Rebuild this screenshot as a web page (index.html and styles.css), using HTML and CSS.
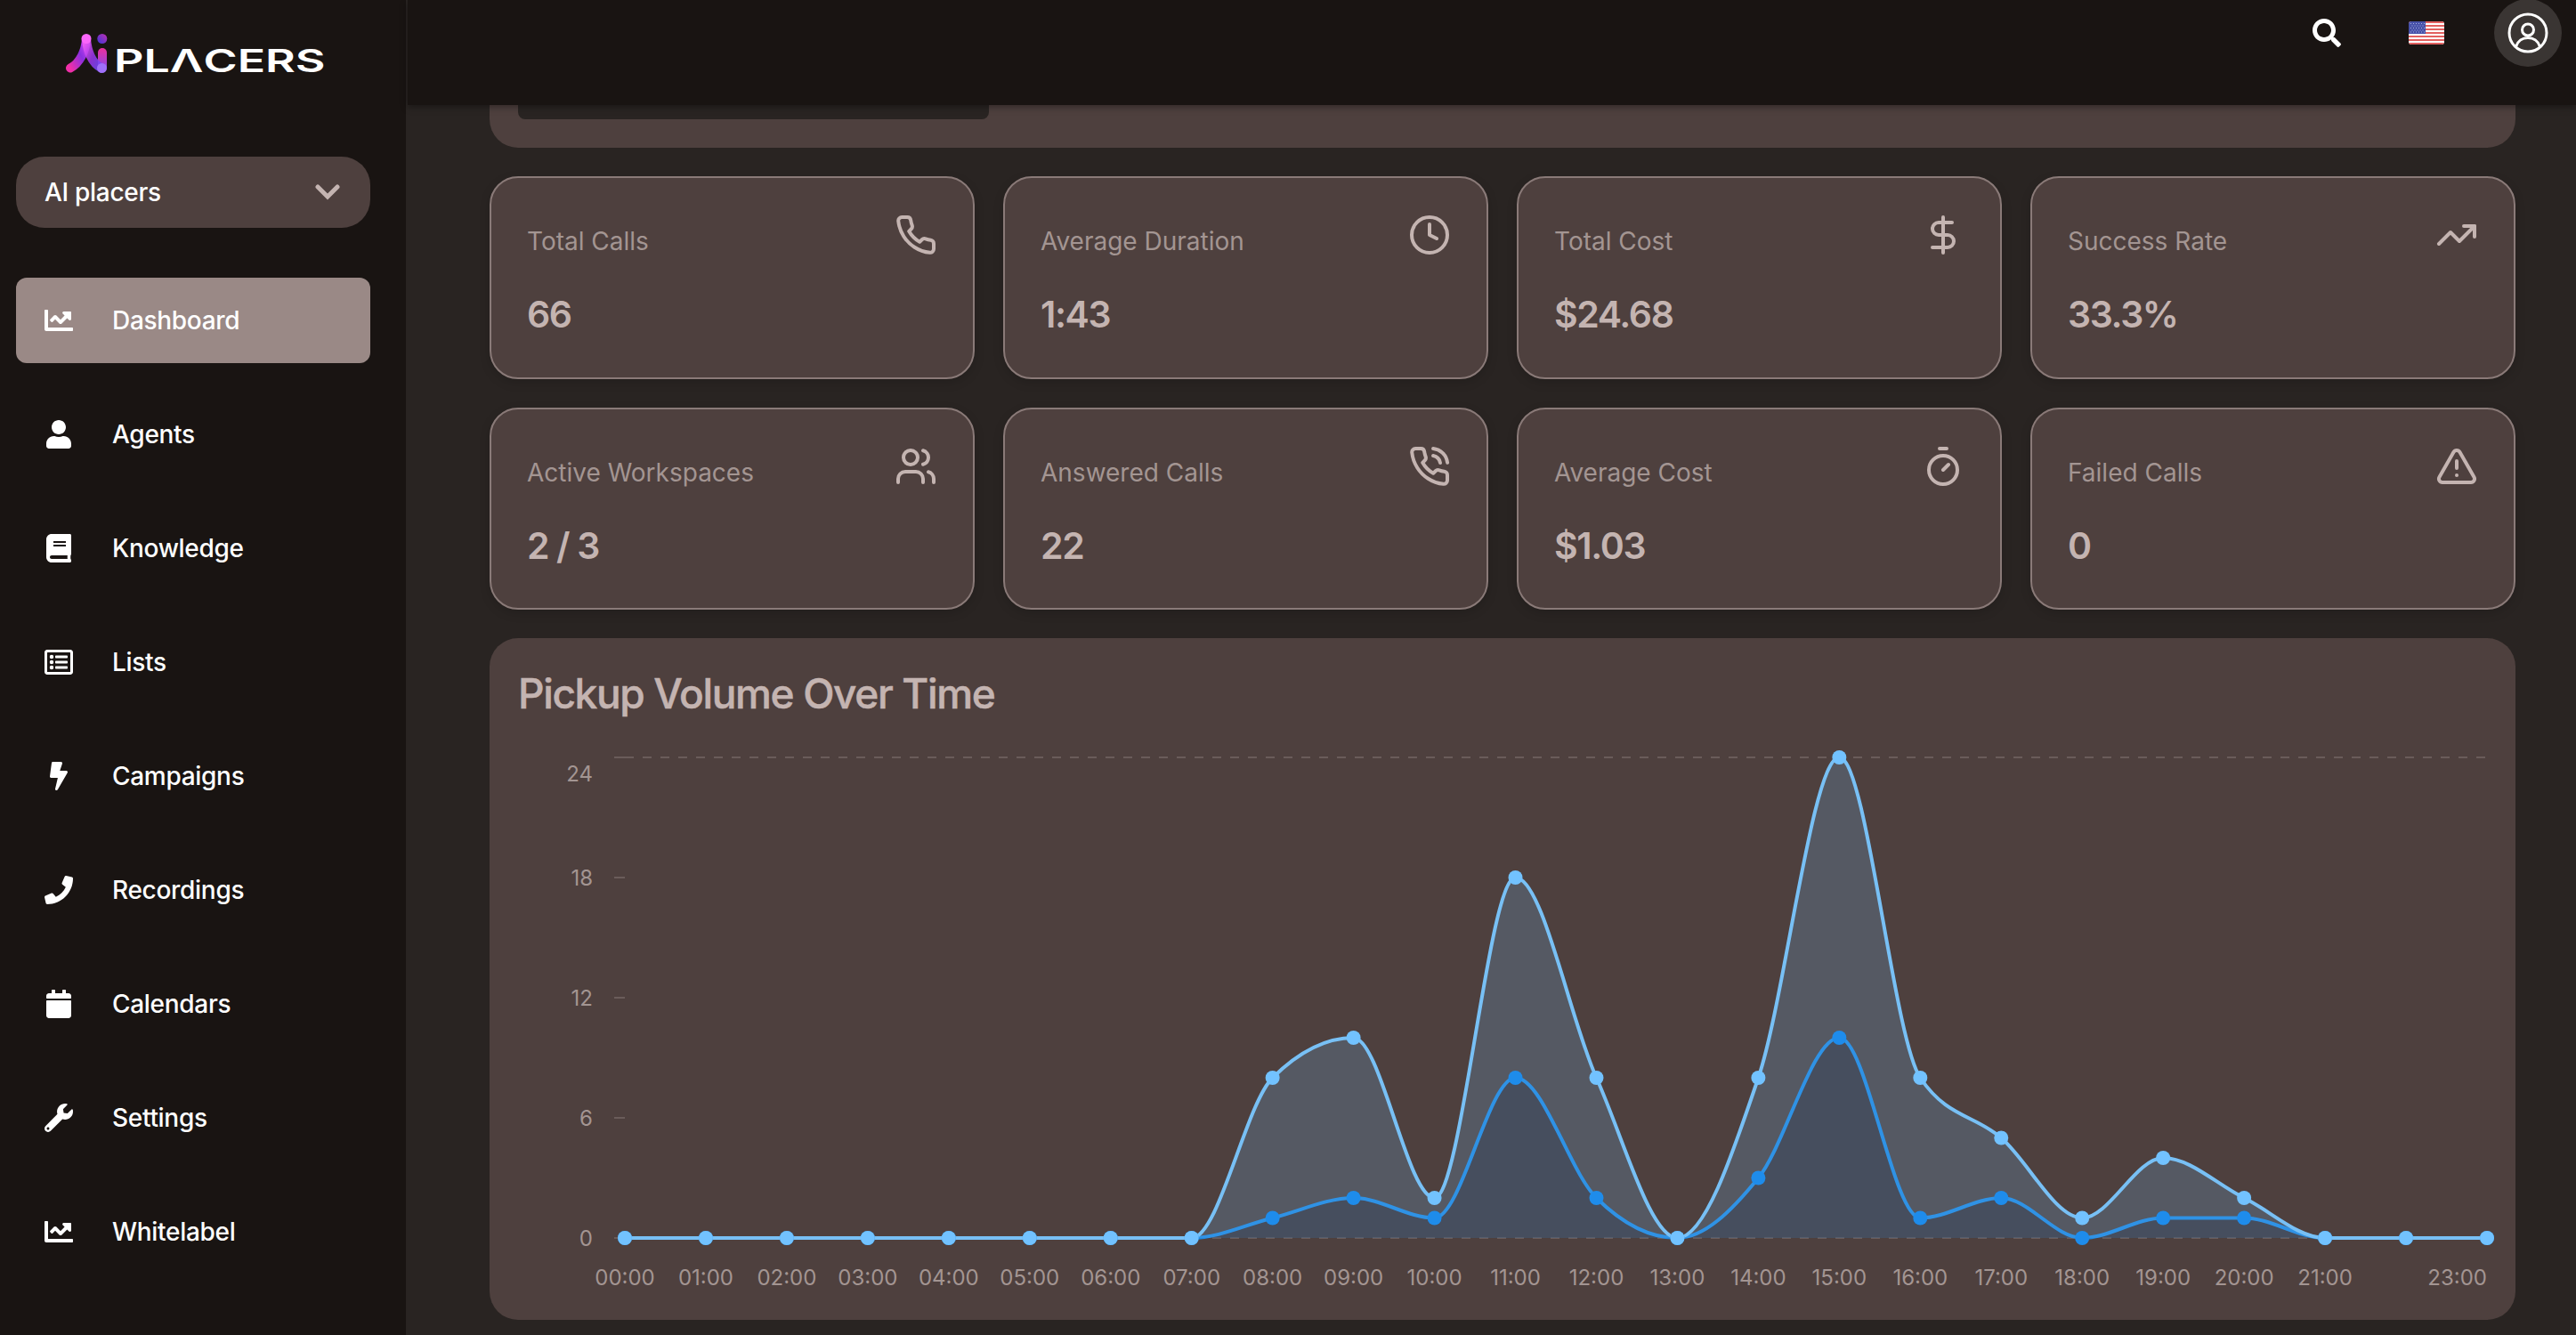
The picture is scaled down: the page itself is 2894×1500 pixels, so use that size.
FILE: index.html
```html
<!DOCTYPE html>
<html lang="en">
<head>
  <meta charset="UTF-8" />
  <meta name="viewport" content="width=device-width, initial-scale=1.0"/>
  <title>Dashboard - AI Placers</title>
  <link rel="stylesheet" href="styles.css">
</head>
<body>
  <svg class="sprite" aria-hidden="true">
    <symbol id="chart" viewBox="0 0 512 512"><path d="M496 384H64V80c0-8.840-7.160-16-16-16H16C7.160 64 0 71.160 0 80v336c0 17.670 14.330 32 32 32h464c8.840 0 16-7.160 16-16v-32c0-8.840-7.160-16-16-16zM464 96H345.940c-21.380 0-32.090 25.850-16.970 40.970l32.400 32.400L288 242.750l-73.370-73.370c-12.500-12.500-32.760-12.500-45.250 0l-68.690 68.690c-6.250 6.250-6.250 16.380 0 22.630l22.620 22.620c6.250 6.250 16.380 6.250 22.630 0L192 237.250l73.370 73.370c12.500 12.500 32.760 12.500 45.250 0l96-96 32.400 32.400c15.120 15.120 40.970 4.410 40.970-16.970V112c.010-8.840-7.150-16-15.990-16z"/></symbol>
    <symbol id="user" viewBox="0 0 512 512"><path d="M256 256c70.700 0 128-57.300 128-128S326.700 0 256 0 128 57.300 128 128s57.300 128 128 128zm89.600 32h-16.700c-22.200 10.200-46.900 16-72.900 16s-50.600-5.800-72.900-16h-16.700C92.200 288 32 348.200 32 422.400V464c0 26.500 21.500 48 48 48h352c26.500 0 48-21.500 48-48v-41.600c0-74.200-60.200-134.400-134.400-134.400z"/></symbol>
    <symbol id="book" viewBox="0 0 512 512"><path d="M480 360V24c0-13.300-10.700-24-24-24H128C75 0 32 43 32 96v320c0 53 43 96 96 96h328c13.300 0 24-10.700 24-24v-16c0-7.500-3.500-14.300-8.900-18.700-4.200-15.400-4.200-59.300 0-74.700 5.400-4.300 8.900-11.100 8.900-18.600zM160 134c0-3.300 2.700-6 6-6h212c3.300 0 6 2.700 6 6v20c0 3.300-2.700 6-6 6H166c-3.300 0-6-2.700-6-6v-20zm0 64c0-3.300 2.700-6 6-6h212c3.300 0 6 2.700 6 6v20c0 3.300-2.700 6-6 6H166c-3.300 0-6-2.700-6-6v-20zm253.400 250H128c-17.700 0-32-14.300-32-32 0-17.600 14.400-32 32-32h285.400c-1.900 17.100-1.900 46.900 0 64z"/></symbol>
    <symbol id="list" viewBox="0 0 512 512"><path d="M464 32H48C21.490 32 0 53.490 0 80v352c0 26.510 21.490 48 48 48h416c26.510 0 48-21.490 48-48V80c0-26.510-21.490-48-48-48zm-6 400H54a6 6 0 0 1-6-6V86a6 6 0 0 1 6-6h404a6 6 0 0 1 6 6v340a6 6 0 0 1-6 6zm-42-92v24c0 6.600-5.400 12-12 12H204c-6.600 0-12-5.400-12-12v-24c0-6.600 5.400-12 12-12h200c6.600 0 12 5.400 12 12zm0-96v24c0 6.600-5.400 12-12 12H204c-6.600 0-12-5.400-12-12v-24c0-6.600 5.400-12 12-12h200c6.600 0 12 5.400 12 12zm0-96v24c0 6.600-5.400 12-12 12H204c-6.600 0-12-5.400-12-12v-24c0-6.600 5.400-12 12-12h200c6.600 0 12 5.400 12 12zm-252 12a36 36 0 1 1-72 0 36 36 0 0 1 72 0zm0 96a36 36 0 1 1-72 0 36 36 0 0 1 72 0zm0 96a36 36 0 1 1-72 0 36 36 0 0 1 72 0z"/></symbol>
    <symbol id="bolt" viewBox="-96 0 512 512"><path d="M296 160H180.600l42.600-129.800C227.200 15 215.700 0 200 0H56C44 0 33.800 8.900 32.200 20.800l-32 240C-1.700 275.200 9.500 288 24 288h118.700L96.600 482.500c-3.600 15.200 8 29.500 23.300 29.500 8.400 0 16.400-4.400 20.800-12l176-304c9.300-15.900-2.200-36-20.700-36z"/></symbol>
    <symbol id="phone-solid" viewBox="0 0 512 512"><path d="M493.400 24.600l-104-24c-11.300-2.600-22.900 3.300-27.500 13.900l-48 112c-4.200 9.800-1.400 21.300 6.900 28l60.600 49.600c-36 76.700-98.900 140.500-177.200 177.200l-49.600-60.600c-6.800-8.300-18.200-11.100-28-6.900l-112 48C3.900 366.500-2 378.100.6 389.400l24 104C27.100 504.200 36.700 512 48 512c256.100 0 464-207.500 464-464 0-11.200-7.700-20.900-18.600-23.400z"/></symbol>
    <symbol id="calendar" viewBox="0 0 512 512"><path d="M44 192h424c6.600 0 12 5.400 12 12v260c0 26.500-21.500 48-48 48H80c-26.500 0-48-21.500-48-48V204c0-6.600 5.400-12 12-12zm436-44v-36c0-26.500-21.500-48-48-48h-48V12c0-6.600-5.400-12-12-12h-40c-6.600 0-12 5.400-12 12v52H192V12c0-6.600-5.400-12-12-12h-40c-6.600 0-12 5.400-12 12v52H80c-26.500 0-48 21.500-48 48v36c0 6.600 5.400 12 12 12h424c6.600 0 12-5.400 12-12z"/></symbol>
    <symbol id="wrench" viewBox="0 0 512 512"><path d="M507.730 109.100c-2.240-9.030-13.540-12.090-20.120-5.510l-74.360 74.360-67.880-11.310-11.310-67.880 74.360-74.360c6.620-6.620 3.430-17.900-5.660-20.160-47.380-11.740-99.550.910-136.580 37.930-39.640 39.640-50.550 97.100-34.050 147.200L18.740 402.760c-24.990 24.990-24.990 65.510 0 90.500 24.990 24.990 65.510 24.990 90.500 0l213.210-213.210c50.120 16.710 107.470 5.680 147.370-34.220 37.070-37.070 49.700-89.320 37.910-136.730zM64 472c-13.250 0-24-10.750-24-24 0-13.260 10.750-24 24-24s24 10.740 24 24c0 13.250-10.750 24-24 24z"/></symbol>
    <symbol id="search" viewBox="0 0 512 512"><path d="M505 442.700L405.300 343c-4.500-4.500-10.600-7-17-7H372c27.600-35.300 44-79.700 44-128C416 93.100 322.900 0 208 0S0 93.100 0 208s93.100 208 208 208c48.300 0 92.700-16.400 128-44v16.300c0 6.400 2.500 12.500 7 17l99.700 99.700c9.400 9.400 24.600 9.400 33.900 0l28.300-28.300c9.400-9.400 9.400-24.600.1-34zM208 336c-70.700 0-128-57.200-128-128 0-70.700 57.200-128 128-128 70.700 0 128 57.200 128 128 0 70.700-57.200 128-128 128z"/></symbol>
  </svg>

  <aside class="sidebar">
    <div class="logo">
      <svg class="logo-mark" viewBox="0 0 48 44">
        <defs>
          <linearGradient id="leg" x1="0" y1="1" x2="1" y2="0"><stop offset="0" stop-color="#f02fa8"/><stop offset=".55" stop-color="#8a2fe0"/><stop offset="1" stop-color="#d94af0"/></linearGradient>
          <linearGradient id="leg2" x1="0" y1="0" x2="1" y2="1"><stop offset="0" stop-color="#f05cf5"/><stop offset=".5" stop-color="#9a35e8"/><stop offset="1" stop-color="#6a4cff"/></linearGradient>
          <linearGradient id="stem" gradientUnits="userSpaceOnUse" x1="42" y1="15" x2="42" y2="43"><stop offset="0" stop-color="#f02f9a"/><stop offset="1" stop-color="#7a4cf5"/></linearGradient>
          <linearGradient id="dot" x1="0" y1="1" x2="1" y2="0"><stop offset="0" stop-color="#3d35d8"/><stop offset="1" stop-color="#c02fb0"/></linearGradient>
        </defs>
        <path d="M6 38.500C17 33 23 19 24 6" stroke="url(#leg)"/>
        <path d="M42 21v17" stroke="url(#stem)"/>
        <path d="M24 6c1 13 6 27 17 32.500" stroke="url(#leg2)" opacity=".88"/>
        <circle cx="24" cy="5.500" r="5.500" fill="#fa66fa"/>
        <circle cx="41.500" cy="38.500" r="5.500" fill="#a070fa"/>
        <circle cx="41.800" cy="5.500" r="5.500" fill="url(#dot)"/>
      </svg>
      <span class="logo-text">PL&Lambda;CERS</span>
    </div>

    <div class="workspace">
      <span>AI placers</span>
      <svg viewBox="0 0 28 18"><path d="M3 3l11 11L25 3"/></svg>
    </div>

    <nav class="menu">
      <a class="item active"><svg><use href="#chart"/></svg>Dashboard</a>
      <a class="item"><svg><use href="#user"/></svg>Agents</a>
      <a class="item"><svg><use href="#book"/></svg>Knowledge</a>
      <a class="item"><svg><use href="#list"/></svg>Lists</a>
      <a class="item"><svg><use href="#bolt"/></svg>Campaigns</a>
      <a class="item"><svg><use href="#phone-solid"/></svg>Recordings</a>
      <a class="item"><svg><use href="#calendar"/></svg>Calendars</a>
      <a class="item"><svg><use href="#wrench"/></svg>Settings</a>
      <a class="item"><svg><use href="#chart"/></svg>Whitelabel</a>
    </nav>
  </aside>

  <div class="page">
    <header class="topbar">
      <svg class="search"><use href="#search"/></svg>
      <svg class="flag" viewBox="0 0 40 26">
        <rect width="40" height="26" fill="#fff"/>
        <path d="M0 1h40M0 5h40M0 9h40M0 13h40M0 17h40M0 21h40M0 25h40" stroke="#e2605f" stroke-width="2"/>
        <rect width="19" height="14" fill="#4650a8"/>
        <path d="M2 2.500h16M3.500 5h14M2 7.500h16M3.500 10h14M2 12h16" stroke="#aab0dc" stroke-width="1" stroke-dasharray="1 2"/>
      </svg>
      <div class="avatar">
        <svg viewBox="0 0 46 46"><circle cx="23" cy="23" r="21"/><circle cx="23" cy="19.500" r="6.500"/><path d="M9.500 38.500c2-6.500 7.500-10 13.500-10s11.500 3.500 13.500 10"/></svg>
      </div>
    </header>

    <main class="content">
      <section class="filters"><div class="filter-box"></div></section>

      <section class="stats">
        <div class="card">
          <div><p class="label">Total Calls</p><p class="value">66</p></div>
          <svg viewBox="0 0 24 24"><path d="M22 16.920v3a2 2 0 0 1-2.180 2 19.790 19.790 0 0 1-8.630-3.070 19.500 19.500 0 0 1-6-6 19.790 19.790 0 0 1-3.070-8.670A2 2 0 0 1 4.110 2h3a2 2 0 0 1 2 1.720 12.840 12.840 0 0 0 .7 2.810 2 2 0 0 1-.45 2.110L8.090 9.910a16 16 0 0 0 6 6l1.270-1.270a2 2 0 0 1 2.110-.45 12.840 12.840 0 0 0 2.810.7A2 2 0 0 1 22 16.920z"/></svg>
        </div>
        <div class="card">
          <div><p class="label">Average Duration</p><p class="value">1:43</p></div>
          <svg viewBox="0 0 24 24"><circle cx="12" cy="12" r="10"/><path d="M12 6v6l4 2"/></svg>
        </div>
        <div class="card">
          <div><p class="label">Total Cost</p><p class="value">$24.68</p></div>
          <svg viewBox="0 0 24 24"><path d="M12 2v20M17 5H9.500a3.500 3.500 0 0 0 0 7h5a3.500 3.500 0 0 1 0 7H6"/></svg>
        </div>
        <div class="card">
          <div><p class="label">Success Rate</p><p class="value">33.3%</p></div>
          <svg viewBox="0 0 24 24"><path d="M22 7l-8.500 8.500-5-5L2 17"/><path d="M16 7h6v6"/></svg>
        </div>
        <div class="card">
          <div><p class="label">Active Workspaces</p><p class="value">2 / 3</p></div>
          <svg viewBox="0 0 24 24"><path d="M16 21v-2a4 4 0 0 0-4-4H6a4 4 0 0 0-4 4v2"/><circle cx="9" cy="7" r="4"/><path d="M22 21v-2a4 4 0 0 0-3-3.870M16 3.130a4 4 0 0 1 0 7.750"/></svg>
        </div>
        <div class="card">
          <div><p class="label">Answered Calls</p><p class="value">22</p></div>
          <svg viewBox="0 0 24 24"><path d="M22 16.920v3a2 2 0 0 1-2.180 2 19.790 19.790 0 0 1-8.630-3.070 19.500 19.500 0 0 1-6-6 19.790 19.790 0 0 1-3.070-8.670A2 2 0 0 1 4.110 2h3a2 2 0 0 1 2 1.720 12.840 12.840 0 0 0 .7 2.810 2 2 0 0 1-.45 2.110L8.090 9.910a16 16 0 0 0 6 6l1.270-1.270a2 2 0 0 1 2.110-.45 12.840 12.840 0 0 0 2.810.7A2 2 0 0 1 22 16.920z"/><path d="M14.050 2a9 9 0 0 1 8 7.940M14.050 6A5 5 0 0 1 18 10"/></svg>
        </div>
        <div class="card">
          <div><p class="label">Average Cost</p><p class="value">$1.03</p></div>
          <svg viewBox="0 0 24 24"><path d="M10 2h4M12 14l3-3"/><circle cx="12" cy="14" r="8"/></svg>
        </div>
        <div class="card">
          <div><p class="label">Failed Calls</p><p class="value">0</p></div>
          <svg viewBox="0 0 24 24"><path d="M21.730 18l-8-14a2 2 0 0 0-3.480 0l-8 14A2 2 0 0 0 4 21h16a2 2 0 0 0 1.730-3zM12 9v4M12 17h.010"/></svg>
        </div>
      </section>

      <section class="chart-card">
        <h2>Pickup Volume Over Time</h2>
        <svg id="chartSvg" class="chart" viewBox="0 0 2212 636"></svg>
      </section>
    </main>
  </div>

  <script>
    const total = [0, 0, 0, 0, 0, 0, 0, 0, 8, 10, 2, 18, 8, 0, 8, 24, 8, 5, 1, 4, 2, 0, 0, 0];
    const pickup = [0, 0, 0, 0, 0, 0, 0, 0, 1, 2, 1, 8, 2, 0, 3, 10, 1, 2, 0, 1, 1, 0, 0, 0];
    const left = 120, right = 2212, top0 = 16, bottom = 556;
    const step = (right - left) / 23;

    const px = i => left + i * step;
    const py = v => bottom - v * (bottom - top0) / 24;

    // monotone cubic interpolation
    function linePath(data) {
      const n = data.length;
      const ys = data.map(py);
      const s = [];
      for (let i = 0; i < n - 1; i++) s.push((ys[i + 1] - ys[i]) / step);
      const t = ys.map((y, i) => {
        if (i === 0 || i === n - 1) return 0;
        const a = s[i - 1], b = s[i], p = (a + b) / 2;
        return (Math.sign(a) + Math.sign(b)) * Math.min(Math.abs(a), Math.abs(b), 0.5 * Math.abs(p)) || 0;
      });
      let d = `M${px(0)},${ys[0]}`;
      for (let i = 0; i < n - 1; i++) {
        const dx = step / 3;
        d += `C${px(i) + dx},${ys[i] + dx * t[i]} ${px(i + 1) - dx},${ys[i + 1] - dx * t[i + 1]} ${px(i + 1)},${ys[i + 1]}`;
      }
      return d;
    }

    function area(data, name) {
      const d = linePath(data);
      return `<path class="area ${name}" d="${d}L${right},${bottom}L${left},${bottom}Z"/>
        <path class="line ${name}" d="${d}"/>`;
    }

    function points(data, name) {
      return data.map((v, i) => `<circle class="point ${name}" cx="${px(i)}" cy="${py(v)}" r="8"/>`).join('');
    }

    let out = '';
    [0, 24].forEach(v => {
      out += `<path class="grid dashed" d="M${left} ${py(v)}H${right}"/>`;
    });
    [0, 6, 12, 18, 24].forEach(v => {
      out += `<path class="grid" d="M${left - 12} ${py(v)}H${left}"/>`;
      out += `<text x="${left - 36}" y="${(v === 24 ? 34 : py(v)) + 9}" text-anchor="end">${v}</text>`;
    });
    total.forEach((v, i) => {
      if (i === 22) return;
      const hour = String(i).padStart(2, '0') + ':00';
      out += `<text x="${px(i)}" y="609" text-anchor="${i === 23 ? 'end' : 'middle'}">${hour}</text>`;
    });
    out += area(pickup, 'pickup') + area(total, 'total');
    out += points(pickup, 'pickup') + points(total, 'total');
    document.getElementById('chartSvg').innerHTML = out;
  </script>
</body>
</html>
```
FILE: styles.css
```css
* {
  box-sizing: border-box;
}

body {
  margin: 0;
  height: 1500px;
  display: flex;
  overflow: hidden;
  font-family: Inter, "Liberation Sans", sans-serif;
  font-size: 28px;
  color: #fff;
  background-color: #292422;
}

.sprite {
  display: none;
}

.sidebar {
  width: 458px;
  flex-shrink: 0;
  padding: 0 40px 0 18px;
  background-color: #191412;
  border-right: 2px solid #292422;
}

.logo {
  display: flex;
  height: 176px;
  padding: 38px 0 0 55px;
  gap: 7px;
}

.logo-mark {
  width: 48px;
  height: 44px;
}

.logo-mark path {
  fill: none;
  stroke-width: 10;
  stroke-linecap: round;
}

.logo-text {
  align-self: flex-start;
  font-size: 36px;
  font-weight: 600;
  line-height: 44px;
  padding-top: 8px;
  transform: scaleX(1.44);
  transform-origin: left;
}

.workspace {
  display: flex;
  align-items: center;
  justify-content: space-between;
  height: 80px;
  padding: 0 34px 0 32px;
  border-radius: 32px;
  background-color: #4e403e;
  font-weight: 500;
  letter-spacing: -0.3px;
}

.workspace svg {
  width: 28px;
  height: 18px;
  fill: none;
  stroke: #c4b4b1;
  stroke-width: 5;
  stroke-linecap: round;
}

.menu {
  display: flex;
  flex-direction: column;
  gap: 32px;
  margin-top: 56px;
}

.item {
  display: flex;
  align-items: center;
  gap: 44px;
  height: 96px;
  padding-left: 32px;
  border-radius: 12px;
  font-weight: 500;
  letter-spacing: -0.3px;
}

.item.active {
  background-color: #9a8986;
}

.item svg {
  width: 32px;
  height: 32px;
  fill: #fff;
}

.page {
  flex: 1;
  min-width: 0;
}

.topbar {
  position: relative;
  z-index: 1;
  display: flex;
  justify-content: flex-end;
  align-items: center;
  height: 118px;
  padding: 0 16px 44px 0;
  background-color: #191412;
  box-shadow: 0 2px 8px rgba(0, 0, 0, 0.4);
}

.search {
  width: 32px;
  height: 32px;
  fill: #fff;
}

.flag {
  width: 40px;
  height: 26px;
  margin: 0 56px 0 76px;
  border-radius: 3px;
}

.avatar {
  display: flex;
  align-items: center;
  justify-content: center;
  width: 76px;
  height: 76px;
  border-radius: 50%;
  background-color: #3a3533;
}

.avatar svg {
  width: 46px;
  height: 46px;
  fill: none;
  stroke: #fff;
  stroke-width: 3;
}

.content {
  padding: 0 68px 0 92px;
}

.filters {
  height: 48px;
  padding-left: 32px;
  border-radius: 0 0 32px 32px;
  background-color: #4e403e;
}

.filter-box {
  width: 529px;
  height: 16px;
  border-radius: 0 0 8px 8px;
  background-color: #292422;
}

.stats {
  display: grid;
  grid-template-columns: repeat(4, 1fr);
  gap: 32px;
  margin: 32px 0;
}

.card {
  display: flex;
  justify-content: space-between;
  height: 227.5px;
  padding: 40px;
  border: 2px solid #8a7a78;
  border-radius: 32px;
  background-color: #4e403e;
  box-shadow: 0 4px 12px rgba(0, 0, 0, 0.15);
}

.card svg {
  width: 48px;
  height: 48px;
  fill: none;
  stroke: #c4b4b1;
  stroke-width: 2;
  stroke-linecap: round;
  stroke-linejoin: round;
}

.label {
  margin: 11px 0 0;
  line-height: 40px;
  color: #a39592;
}

.value {
  margin: 34px 0 0;
  font-size: 41px;
  font-weight: 600;
  line-height: 56px;
  letter-spacing: -1.4px;
  color: #c4b4b1;
}

.chart-card {
  height: 766px;
  padding: 32px;
  border-radius: 32px;
  background-color: #4e403e;
}

.chart-card h2 {
  margin: 0;
  font-size: 46px;
  font-weight: 500;
  line-height: 60px;
  letter-spacing: -1.35px;
  color: #c4b4b1;
  -webkit-text-stroke: 0.5px #c4b4b1;
}

.chart {
  display: block;
  width: 2212px;
  height: 636px;
  margin-top: 26px;
  overflow: visible;
}

.chart text {
  font-size: 24px;
  fill: #a39592;
}

.grid {
  stroke: #6a5c5a;
  stroke-width: 2;
}

.dashed {
  stroke-dasharray: 10 10;
}

.line {
  fill: none;
  stroke-width: 4;
}

.line.total {
  stroke: #78c0f5;
}

.line.pickup {
  stroke: #1f88e0;
}

.area.total {
  fill: #72bff8;
  fill-opacity: 0.2;
}

.area.pickup {
  fill: #0a1026;
  fill-opacity: 0.28;
}

.point.total {
  fill: #72c2ff;
}

.point.pickup {
  fill: #1e8ceb;
}
```
